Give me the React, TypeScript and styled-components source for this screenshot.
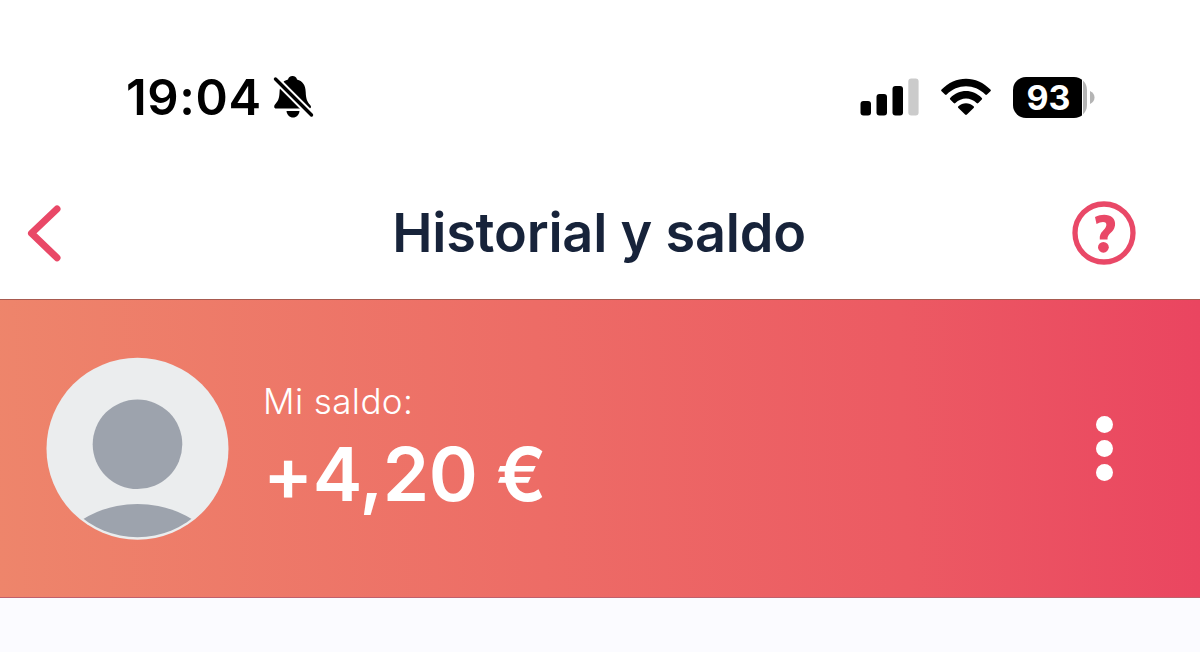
import React from "react";
import styled, { createGlobalStyle } from "styled-components";

const Theme = {
  primary: "#e94867",
  title: "#17233a",
  page: "#fbfbff",
};

const GlobalStyle = createGlobalStyle`
  * {
    box-sizing: border-box;
  }

  body {
    margin: 0;
    background-color: ${Theme.page};
    font-family: Inter, "Liberation Sans", sans-serif;
  }
`;

const Screen = styled.main`
  display: flex;
  flex-direction: column;
  height: 652px;
  overflow: hidden;
  background-color: ${Theme.page};

  svg {
    display: block;
    flex-shrink: 0;
  }
`;

const StatusBar = styled.div`
  display: flex;
  align-items: center;
  justify-content: space-between;
  height: 167px;
  padding: 27px 105px 0 126px;
  background-color: #fff;
  color: #000;
`;

const StatusGroup = styled.div<{ $gap: number }>`
  display: flex;
  align-items: center;
  gap: ${(props) => props.$gap}px;
`;

const Clock = styled.time`
  padding-top: 2px;
  font-size: 49px;
  font-weight: 600;
  letter-spacing: 0.6px;
  line-height: 60px;
`;

const Battery = styled.div`
  display: flex;
  align-items: center;
  gap: 3px;
`;

const BatteryBody = styled.div`
  width: 74px;
  height: 41px;
  border-radius: 13px;
  background: linear-gradient(
    to right,
    #000 69.5px,
    #fff 69.5px,
    #fff 70.5px,
    #b4b4b4 70.5px
  );
  color: #fff;
  font-size: 34px;
  font-weight: 700;
  line-height: 41px;
  text-align: center;
  padding-right: 3px;
`;

const Header = styled.header`
  display: grid;
  grid-template-columns: 120px 1fr 120px;
  align-items: center;
  height: 133px;
  background-color: #fff;
  border-bottom: 1px solid #a85a50;
`;

const IconButton = styled.button<{ $end?: boolean }>`
  display: flex;
  justify-content: ${(props) => (props.$end ? "flex-end" : "flex-start")};
  padding: ${(props) => (props.$end ? "0 64px 0 0" : "0 0 0 27px")};
  border: none;
  background-color: transparent;
  cursor: pointer;
`;

const Title = styled.h1`
  margin: 0;
  padding: 0 2px 1px 0;
  color: ${Theme.title};
  font-size: 54px;
  font-weight: 620;
  letter-spacing: -0.2px;
  line-height: 66px;
  text-align: center;
  white-space: nowrap;
`;

const Balance = styled.section`
  display: flex;
  align-items: center;
  height: 298px;
  padding: 0 87px 0 46px;
  background: linear-gradient(
    88deg,
    #ee856b 0%,
    #ed6c66 45%,
    #ec5a63 75%,
    #ea4560 100%
  );
  border-bottom: 1px solid #c0606c;
  color: #fff;
`;

const BalanceText = styled.div`
  flex: 1;
  margin-left: 33px;
  padding-top: 6px;
`;

const Label = styled.p`
  margin: 0;
  font-size: 35px;
  font-weight: 350;
  letter-spacing: 0.4px;
  line-height: 46px;
`;

const Amount = styled.p`
  margin: 0;
  font-size: 74.5px;
  font-weight: 620;
  letter-spacing: -0.4px;
  line-height: 101px;
  white-space: nowrap;
`;

const MoreButton = styled.button`
  display: flex;
  flex-direction: column;
  gap: 7px;
  padding: 0;
  border: none;
  background-color: transparent;
  cursor: pointer;
`;

const Dot = styled.span`
  width: 17px;
  height: 17px;
  border-radius: 50%;
  background-color: #fff;
`;

const BellOffIcon = () => (
  <svg width="42" height="44" viewBox="0 0 42 44">
    <path
      d="M3 33.5C1 33.5 0.7 31 2 29.5C5 26 6.2 24 6.5 18C6.7 10 9.500 6 15 4.500C15.500 2.500 17 1 19.500 1S23.500 2.500 24 4.500C29.500 6 32.500 10 32.700 17C33 24 34 26.500 37.500 30.500C38.500 32 38 33.500 36 33.500Z"
      fill="#000"
    />
    <path d="M13.500 36H26.500C26 40 23.500 42.500 20 42.500S14 40 13.500 36Z" fill="#000" />
    <path d="M-1 0.500L42 43.500" stroke="#fff" strokeWidth="7.500" />
    <path
      d="M2.500 4L38.500 40"
      stroke="#000"
      strokeWidth="3.400"
      strokeLinecap="round"
    />
  </svg>
);

const SignalIcon = () => (
  <svg width="59" height="38" viewBox="0 0 59 38">
    <rect x="0.500" y="23" width="10.500" height="14.500" rx="3" />
    <rect x="16.500" y="16" width="10.500" height="21.500" rx="3" />
    <rect x="32.500" y="8" width="10.500" height="29.500" rx="3" />
    <rect x="48.300" y="0.500" width="10.300" height="37" rx="3" fill="#cbcbcb" />
  </svg>
);

const WifiIcon = () => (
  <svg width="50" height="38" viewBox="0 0 50 38">
    <path d="M0.600 11.600C14 -3 36 -3 49.400 11.600C50 12.300 50 12.700 49.400 13.300L46 16.500C45.300 17.100 44.900 17.100 44.300 16.500C33.500 5.500 16.500 5.500 5.700 16.500C5.100 17.100 4.700 17.100 4 16.500L0.600 13.300C0 12.700 0 12.300 0.600 11.600Z" />
    <path d="M9.200 20C18 10.700 32 10.700 40.800 20C41.300 20.600 41.300 21.100 40.800 21.600L37.300 25C36.700 25.600 36.200 25.600 35.600 25C29.500 19 20.500 19 14.400 25C13.800 25.600 13.300 25.600 12.700 25L9.200 21.600C8.700 21.100 8.700 20.600 9.200 20Z" />
    <path d="M17.400 28.300C21.700 24.300 28.300 24.300 32.600 28.300C33.200 28.900 33.200 29.400 32.600 29.900L25.900 36.600C25.300 37.200 24.700 37.200 24.100 36.600L17.400 29.900C16.800 29.400 16.800 28.900 17.400 28.300Z" />
  </svg>
);

const BackIcon = () => (
  <svg width="35" height="57" viewBox="0 0 35 57">
    <path
      d="M30 4L4.500 28.300L30 52.800"
      fill="none"
      stroke={Theme.primary}
      strokeWidth="7"
      strokeLinecap="round"
      strokeLinejoin="round"
    />
  </svg>
);

const HelpIcon = () => (
  <svg width="64" height="64" viewBox="0 0 64 64">
    <circle
      cx="32"
      cy="32"
      r="29"
      fill="none"
      stroke={Theme.primary}
      strokeWidth="5.300"
    />
    <path
      d="M23 16C33 11 44.500 14.500 43 24.500C41.500 32.500 35.200 32 35.500 38.500H27.800C27 30.500 33.300 29.500 34.300 24.500C35.200 20 29.500 20 24.500 23Z"
      fill={Theme.primary}
    />
    <circle cx="31.400" cy="46.300" r="5.400" fill={Theme.primary} />
  </svg>
);

const Avatar = () => (
  <svg width="184" height="184" viewBox="0 0 184 184">
    <defs>
      <clipPath id="avatar-clip">
        <circle cx="91.500" cy="91.500" r="88.800" />
      </clipPath>
    </defs>
    <circle cx="91.500" cy="91.700" r="91" fill="#ebedee" />
    <circle cx="91.500" cy="87.300" r="44.800" fill="#9da3ad" />
    <circle
      cx="91.500"
      cy="253"
      r="106"
      fill="#9da3ad"
      clipPath="url(#avatar-clip)"
    />
  </svg>
);

export default function App() {
  return (
    <>
      <GlobalStyle />
      <Screen>
        <StatusBar>
          <StatusGroup $gap={11}>
            <Clock>19:04</Clock>
            <BellOffIcon />
          </StatusGroup>
          <StatusGroup $gap={22}>
            <SignalIcon />
            <WifiIcon />
            <Battery>
              <BatteryBody>93</BatteryBody>
              <svg width="5" height="13" viewBox="0 0 5 13">
                <path d="M0 0C6 2.500 6 10.500 0 13Z" fill="#b4b4b4" />
              </svg>
            </Battery>
          </StatusGroup>
        </StatusBar>

        <Header>
          <IconButton aria-label="Volver">
            <BackIcon />
          </IconButton>
          <Title>Historial y saldo</Title>
          <IconButton $end aria-label="Ayuda">
            <HelpIcon />
          </IconButton>
        </Header>

        <Balance>
          <Avatar />
          <BalanceText>
            <Label>Mi saldo:</Label>
            <Amount>+4,20 €</Amount>
          </BalanceText>
          <MoreButton aria-label="Más opciones">
            <Dot />
            <Dot />
            <Dot />
          </MoreButton>
        </Balance>
      </Screen>
    </>
  );
}
